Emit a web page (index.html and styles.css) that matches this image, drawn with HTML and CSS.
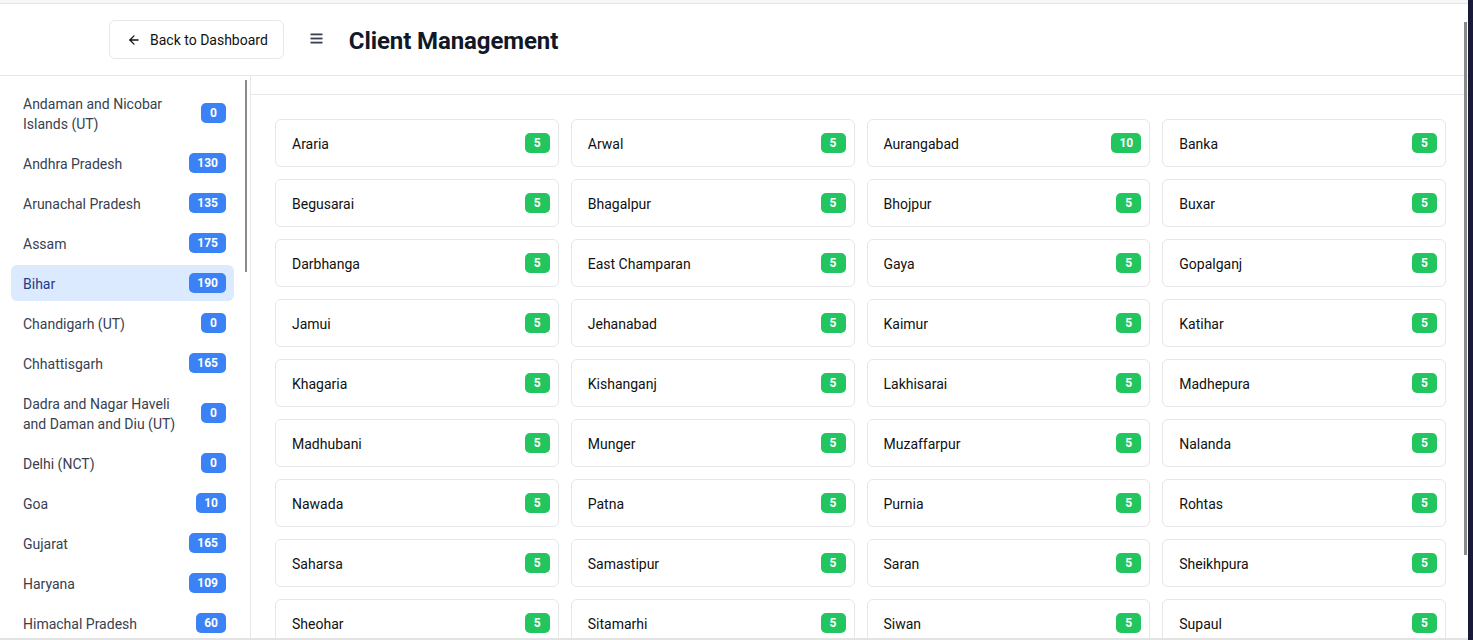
FILE: index.html
```html
<!DOCTYPE html>
<html lang="en">
<head>
<meta charset="utf-8">
<title>Client Management</title>
<link rel="stylesheet" href="styles.css">
</head>
<body>
<div class="frame">
  <div class="app">
    <div class="topstrip"></div>
    <header class="header">
      <button class="back-btn" type="button">
        <svg class="back-icon" width="14" height="14" viewBox="0 0 24 24" fill="none" stroke="currentColor" stroke-width="2.2" stroke-linecap="round" stroke-linejoin="round"><path d="M19 12H5"/><path d="M12 19l-7-7 7-7"/></svg>
        <span>Back to Dashboard</span>
      </button>
      <span class="menu-icon"><svg width="13" height="11" viewBox="0 0 13 11"><rect x="0.5" y="0.5" width="12" height="1.8" fill="#374151"/><rect x="0.5" y="4.6" width="12" height="1.8" fill="#374151"/><rect x="0.5" y="8.7" width="12" height="1.8" fill="#374151"/></svg></span>
      <h1 class="title">Client Management</h1>
    </header>
    <div class="content">
      <aside class="sidebar">
        <ul class="state-list">
          <li class="state"><span class="state-name">Andaman and Nicobar Islands (UT)</span><span class="badge badge-blue">0</span></li>
          <li class="state"><span class="state-name">Andhra Pradesh</span><span class="badge badge-blue">130</span></li>
          <li class="state"><span class="state-name">Arunachal Pradesh</span><span class="badge badge-blue">135</span></li>
          <li class="state"><span class="state-name">Assam</span><span class="badge badge-blue">175</span></li>
          <li class="state state-active"><span class="state-name">Bihar</span><span class="badge badge-blue">190</span></li>
          <li class="state"><span class="state-name">Chandigarh (UT)</span><span class="badge badge-blue">0</span></li>
          <li class="state"><span class="state-name">Chhattisgarh</span><span class="badge badge-blue">165</span></li>
          <li class="state"><span class="state-name">Dadra and Nagar Haveli and Daman and Diu (UT)</span><span class="badge badge-blue">0</span></li>
          <li class="state"><span class="state-name">Delhi (NCT)</span><span class="badge badge-blue">0</span></li>
          <li class="state"><span class="state-name">Goa</span><span class="badge badge-blue">10</span></li>
          <li class="state"><span class="state-name">Gujarat</span><span class="badge badge-blue">165</span></li>
          <li class="state"><span class="state-name">Haryana</span><span class="badge badge-blue">109</span></li>
          <li class="state"><span class="state-name">Himachal Pradesh</span><span class="badge badge-blue">60</span></li>
          <li class="state"><span class="state-name">Jammu and Kashmir (UT)</span><span class="badge badge-blue">0</span></li>
          <li class="state"><span class="state-name">Jharkhand</span><span class="badge badge-blue">120</span></li>
          <li class="state"><span class="state-name">Karnataka</span><span class="badge badge-blue">155</span></li>
        </ul>
        <div class="sb-thumb"></div>
      </aside>
      <main class="main">
        <div class="main-bar"></div>
        <div class="grid">
          <div class="card"><span>Araria</span><span class="badge badge-green">5</span></div>
          <div class="card"><span>Arwal</span><span class="badge badge-green">5</span></div>
          <div class="card"><span>Aurangabad</span><span class="badge badge-green">10</span></div>
          <div class="card"><span>Banka</span><span class="badge badge-green">5</span></div>
          <div class="card"><span>Begusarai</span><span class="badge badge-green">5</span></div>
          <div class="card"><span>Bhagalpur</span><span class="badge badge-green">5</span></div>
          <div class="card"><span>Bhojpur</span><span class="badge badge-green">5</span></div>
          <div class="card"><span>Buxar</span><span class="badge badge-green">5</span></div>
          <div class="card"><span>Darbhanga</span><span class="badge badge-green">5</span></div>
          <div class="card"><span>East Champaran</span><span class="badge badge-green">5</span></div>
          <div class="card"><span>Gaya</span><span class="badge badge-green">5</span></div>
          <div class="card"><span>Gopalganj</span><span class="badge badge-green">5</span></div>
          <div class="card"><span>Jamui</span><span class="badge badge-green">5</span></div>
          <div class="card"><span>Jehanabad</span><span class="badge badge-green">5</span></div>
          <div class="card"><span>Kaimur</span><span class="badge badge-green">5</span></div>
          <div class="card"><span>Katihar</span><span class="badge badge-green">5</span></div>
          <div class="card"><span>Khagaria</span><span class="badge badge-green">5</span></div>
          <div class="card"><span>Kishanganj</span><span class="badge badge-green">5</span></div>
          <div class="card"><span>Lakhisarai</span><span class="badge badge-green">5</span></div>
          <div class="card"><span>Madhepura</span><span class="badge badge-green">5</span></div>
          <div class="card"><span>Madhubani</span><span class="badge badge-green">5</span></div>
          <div class="card"><span>Munger</span><span class="badge badge-green">5</span></div>
          <div class="card"><span>Muzaffarpur</span><span class="badge badge-green">5</span></div>
          <div class="card"><span>Nalanda</span><span class="badge badge-green">5</span></div>
          <div class="card"><span>Nawada</span><span class="badge badge-green">5</span></div>
          <div class="card"><span>Patna</span><span class="badge badge-green">5</span></div>
          <div class="card"><span>Purnia</span><span class="badge badge-green">5</span></div>
          <div class="card"><span>Rohtas</span><span class="badge badge-green">5</span></div>
          <div class="card"><span>Saharsa</span><span class="badge badge-green">5</span></div>
          <div class="card"><span>Samastipur</span><span class="badge badge-green">5</span></div>
          <div class="card"><span>Saran</span><span class="badge badge-green">5</span></div>
          <div class="card"><span>Sheikhpura</span><span class="badge badge-green">5</span></div>
          <div class="card"><span>Sheohar</span><span class="badge badge-green">5</span></div>
          <div class="card"><span>Sitamarhi</span><span class="badge badge-green">5</span></div>
          <div class="card"><span>Siwan</span><span class="badge badge-green">5</span></div>
          <div class="card"><span>Supaul</span><span class="badge badge-green">5</span></div>
          <div class="card"><span>Vaishali</span><span class="badge badge-green">5</span></div>
          <div class="card"><span>West Champaran</span><span class="badge badge-green">5</span></div>
        </div>
      </main>
    </div>
    <div class="page-thumb"></div>
  </div>
  <div class="edge"></div>
</div>
</body>
</html>
```

FILE: styles.css
```css
* { box-sizing: border-box; }
html, body { height: 100%; }
body {
  margin: 0;
  overflow: hidden;
  font-family: "Segoe UI", Roboto, "Noto Sans", sans-serif;
  background: #ffffff;
  color: #111111;
}
.frame {
  display: flex;
  height: 100vh;
}
.app {
  flex: 1;
  position: relative;
  display: flex;
  flex-direction: column;
  min-width: 0;
  overflow: hidden;
  background: #ffffff;
  border-bottom: 2px solid #e3e3e3;
}
.edge {
  width: 5px;
  background: #1b1a36;
}
.topstrip {
  height: 4px;
  background: #f7f7f7;
  border-bottom: 1px solid #e4e4e4;
  flex: none;
}
.header {
  flex: none;
  height: 72px;
  display: flex;
  align-items: center;
  gap: 26px;
  padding-left: 109px;
  border-bottom: 1px solid #e5e7eb;
}
.back-btn {
  display: flex;
  align-items: center;
  gap: 9px;
  height: 39px;
  padding: 0 15px 0 17px;
  background: #ffffff;
  border: 1px solid #e5e7eb;
  border-radius: 6px;
  font-family: inherit;
  font-size: 14px;
  color: #111111;
}
.back-icon { color: #111111; }
.menu-icon {
  display: flex;
  align-items: center;
  margin-top: -2px;
}
.title {
  margin: 0;
  margin-top: 2px;
  font-size: 24px;
  font-weight: 700;
  color: #111827;
  letter-spacing: -0.1px;
}
.content {
  flex: 1;
  display: flex;
  min-height: 0;
}
.sidebar {
  position: relative;
  flex: none;
  width: 251px;
  border-right: 1px solid #e5e7eb;
  overflow: hidden;
  padding: 9px 16px 0 11px;
}
.state-list {
  list-style: none;
  margin: 0;
  padding: 0;
  display: flex;
  flex-direction: column;
  gap: 4px;
}
.state {
  display: flex;
  align-items: center;
  justify-content: space-between;
  gap: 14px;
  padding: 9px 8px 7px 12px;
  border-radius: 6px;
  font-size: 14px;
  line-height: 20px;
  color: #374151;
}
.state .badge { margin-top: -2px; }
.state-active {
  background: #dbeafe;
  color: #1e3a8a;
}
.badge {
  flex: none;
  display: inline-block;
  padding: 2px 8px;
  min-width: 25px;
  text-align: center;
  border-radius: 5px;
  font-size: 12px;
  line-height: 16px;
  font-weight: 700;
  color: #ffffff;
}
.badge-blue { background: #3b82f6; }
.badge-green { background: #22c55e; }
.sb-thumb {
  position: absolute;
  left: 245px;
  top: 4px;
  width: 2px;
  height: 192px;
  background: #8a8a8a;
}
.main {
  flex: 1;
  min-width: 0;
  overflow: hidden;
}
.main-bar {
  height: 19px;
  border-bottom: 1px solid #e5e7eb;
}
.grid {
  display: grid;
  grid-template-columns: repeat(4, 1fr);
  gap: 12px;
  padding: 24px 22px 24px 24px;
}
.card {
  display: flex;
  align-items: center;
  justify-content: space-between;
  height: 48px;
  padding: 1px 8px 0 16px;
  border: 1px solid #e5e7eb;
  border-radius: 6px;
  font-size: 14px;
  color: #111111;
}
.card .badge { margin-top: -1px; }
.page-thumb {
  position: absolute;
  right: 1px;
  top: 22px;
  width: 3px;
  height: 533px;
  background: #8a8a8a;
}
```
